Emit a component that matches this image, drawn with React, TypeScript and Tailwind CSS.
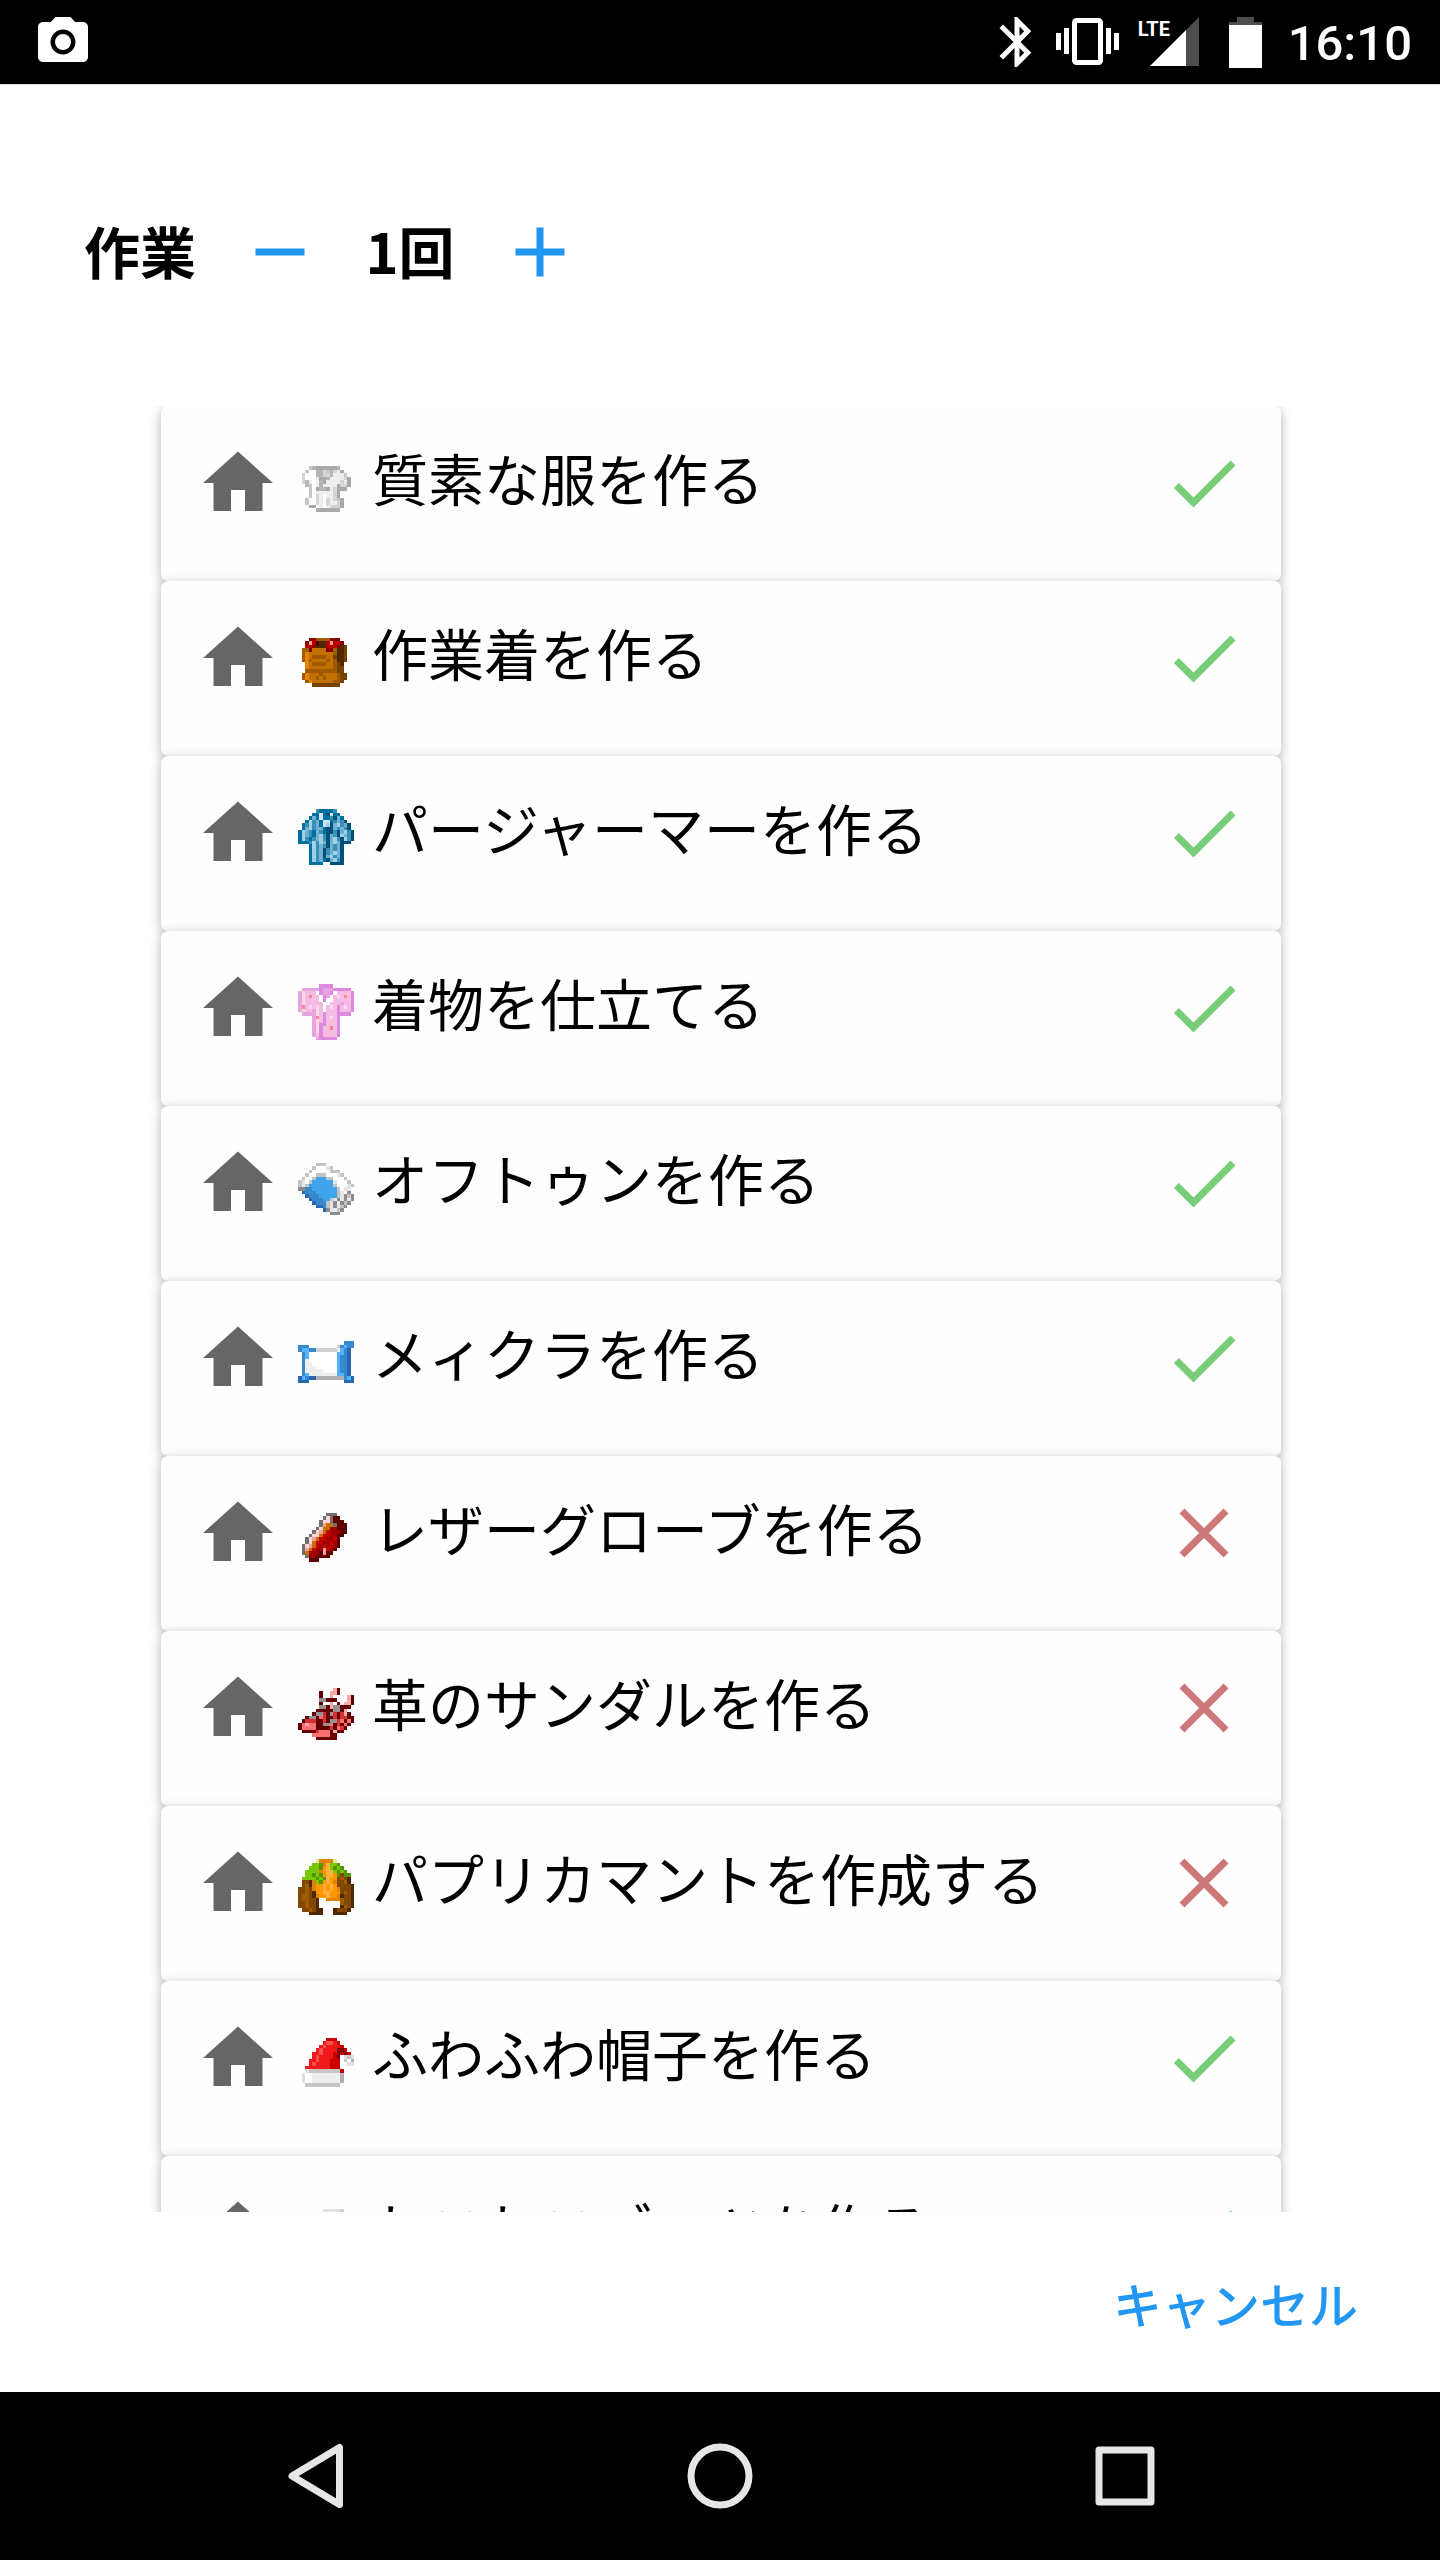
import { useState } from "react";
import type { ReactNode } from "react";

type SpriteData = { palette: Record<string, string>; rows: string[] };

const shirt: SpriteData = {
  palette: { a: "#a8a8a8", m: "#b6b6b6", b: "#c6c6c6", c: "#d4d4d4", d: "#eeeeee", w: "#ffffff" },
  rows: [
    "................",
    "................",
    "...bmaaaaaam....",
    "..bwwmmcbmcda...",
    ".cwwwmmccmdddb..",
    ".cwwwdaamddddca.",
    ".cmdwdmaddddcda.",
    "..mbwdmddddacca.",
    "...bwammadcaaa..",
    "...bwdddddca....",
    "...bwcdwddca....",
    "..bwwcdwcdcba...",
    "..bwwcdwcddca...",
    "...aawdwdccca...",
    ".....aaaaaaa....",
    "................",
  ],
};

const backpack: SpriteData = {
  palette: {
    R: "#880000", r: "#b80000", P: "#ff9c9c", k: "#480000", D: "#502800",
    B: "#784000", O: "#a05a00", o: "#c47000", L: "#e48400",
  },
  rows: [
    "................",
    "...RROOOORRR....",
    "..RPrkDDrPrrR...",
    "..rrRDDDrrrRDB..",
    ".OORooooRRODDB..",
    ".OLoooooooODDB..",
    ".OLoOOOOooBDDB..",
    ".OLOooooOoODDB..",
    "..LoOOOOooOBD...",
    "..LoooooooOBB...",
    "..OOOOOOOOOBB...",
    ".OLoooOooooOBB..",
    ".OLooOoOoooOBB..",
    "..OLooooooOOB...",
    "....BBBBBBBB....",
    "................",
  ],
};

const pajama: SpriteData = {
  palette: { T: "#0070a0", N: "#005078", M: "#3890b8", S: "#70b0d0", L: "#a0d0e4", W: "#c8e8f8" },
  rows: [
    ".....MTTTTM.....",
    "....TTWTNWTT....",
    "...TSTWTTMNST...",
    "..TLMSTWWTMSMN..",
    ".TMLMSTWLNSLMSN.",
    ".TSLMSSTNNSMSMN.",
    "TLSMTSMTNNMNSLMN",
    "TLSMTSLMNSMNLSMN",
    "TLMTMSLMNSLMNLMN",
    "TTTMLMLSNSLSNNN.",
    "...TLMSMNSMSN...",
    "...TLMSNMSMSN...",
    "...TLMSNMSLSN...",
    "...TLMSNSLMSN...",
    "...TLMSTNSLMN...",
    "...TTTT..NNNN...",
  ],
};

const kimono: SpriteData = {
  palette: { V: "#de88e0", v: "#e8a4e0", P: "#f4bce0", K: "#fcd8e0", R: "#f88888", w: "#ffffff", Q: "#fcd4fc" },
  rows: [
    "......VVVV......",
    ".vvvvvVvvvVVVVV.",
    "vKPPPwVvvVwPPPPV",
    "vKPRPPwVvwPQPRPV",
    "vKPPPPwVwwPPPPPV",
    "vKPPPPPwwPPPvPPV",
    "vRPQPKPwPQPVPQPV",
    "vKPPvKPwPPPVPPPV",
    ".vvvvKPVPPPVVVV.",
    "....vRPVPQPV....",
    "....vKPVPPPV....",
    "....vKVVPPPV....",
    "....vKVPPRPV....",
    "....vKVPPPPV....",
    "....vPVPPPPV....",
    ".....vVVVVV.....",
  ],
};

const futon: SpriteData = {
  palette: { c: "#c4c4c4", g: "#8c8c8c", e: "#e6e6e6", w: "#ffffff", B: "#2868b0", b: "#3888d0", s: "#40a4ec" },
  rows: [
    "................",
    ".....ccc........",
    "....cwwwec......",
    "...cwwwwwccc....",
    "..cwwcccwwwec...",
    ".cwwcsssccwwwc..",
    "cewcssssssewwwc.",
    "cecssssssscwwwec",
    "ggbbssssssscwee.",
    ".Bbbbsssssscewg.",
    "..Bbbbssssscegcg",
    "...Bbbbsscegegeg",
    "....Bbbbcegegcg.",
    ".....BBbcegecg..",
    ".......Bgeecg...",
    ".........ggg....",
  ],
};

const pillow: SpriteData = {
  palette: { c: "#d0d0d0", m: "#b0b0b0", e: "#eeeeee", w: "#ffffff", B: "#2868b0", b: "#3888d0", s: "#50b4ff" },
  rows: [
    "................",
    "................",
    ".............bbb",
    "bbb........cbsbb",
    "bssbbccccccesbB.",
    ".bswwwwwwwwssbB.",
    ".bswwwwwwwwsbbB.",
    ".bewwwwwwwwsbbB.",
    ".beewwwwwwwsbbB.",
    ".beeewwwwwwsbbB.",
    ".beeeeewwwwsbbB.",
    ".bseeeeeeeessbB.",
    "BsbBBmmmmmmmmbsB",
    "BBB..........BBB",
    "................",
    "................",
  ],
};

const glove: SpriteData = {
  palette: { g: "#707070", P: "#ffd4d4", p: "#f8a0a0", O: "#c47000", k: "#600000", R: "#a00000", r: "#c80000" },
  rows: [
    "................",
    "........ggg.....",
    ".......gPgkk....",
    "......gPPgkkk...",
    "......gpOOgkkk..",
    ".....gPOORRkkk..",
    "....gPpOrRRRkk..",
    "...gPPOrrRRkk...",
    "..gPpOrrRRrk....",
    "..gPOrrRRrRk....",
    ".gPpOrRrRrRk....",
    ".gpOrRRprRk.....",
    ".gORRRkpkk......",
    "..gRRkkkk.......",
    "...kkk..........",
    "................",
  ],
};

const sandals: SpriteData = {
  palette: { p: "#f8a8a8", P: "#f87070", g: "#989090", k: "#640000", R: "#a00000", r: "#d83030" },
  rows: [
    "................",
    "..........pk....",
    "......k..ppk....",
    "......k..p....pk",
    "......ggkkk...pk",
    "......k..p.k.ppk",
    "......ggkpggkkk.",
    ".....kkkkkggkp..",
    "....kggrkgrkrpk.",
    "..kggkPrkkrkrrkk",
    ".krrrkkrkggrPkPk",
    "kPpPPkkggPkrkPk.",
    "kPPPPkkkkrkPrk..",
    ".kkkkrPPPkpkk...",
    "....PPPPPkk.....",
    ".....kkkkkk.....",
  ],
};

const cloak: SpriteData = {
  palette: {
    G: "#78c800", g: "#589400", y: "#d0f098", o: "#ff9800", O: "#e08400",
    l: "#ffb040", B: "#804800", b: "#a05c00", D: "#502800",
  },
  rows: [
    ".....yOOOOy.....",
    "....GGgOlGGg....",
    "...GGGgolGgGg...",
    "..GGGGOollGgGg..",
    "..GGgGgollogBgg.",
    ".GGGGgGglooBbBD.",
    ".BBDOGgoloOBBbD.",
    ".BbDOoololoBBBBD",
    "BBbBOoololoOBBBD",
    "BBbBDoolloooBbBD",
    "BbbBDOoolooODBBD",
    "BbbBBD..OOOObBBD",
    "BBbBBD......bBBD",
    "BBbBBD......DbBD",
    ".BBbBDD...DBBBD.",
    "...DDDD...DDDD..",
  ],
};

const hat: SpriteData = {
  palette: {
    R: "#c80000", r: "#f01818", p: "#f85050", D: "#800000",
    e: "#e0e0e0", c: "#c6c6c6", m: "#b0b0b0", f: "#eeeeee", w: "#ffffff",
  },
  rows: [
    "................",
    "........RRR.....",
    ".......rpprR....",
    "......rprrrrR...",
    ".....rprrrrDDR..",
    "....rrprrrRDRDR.",
    "....rprrrrRD.ece",
    "...rrprrrRRR.cwm",
    "...rprrrrRRR..ee",
    "..rrrrrrrRRR....",
    "..ecccccccccR...",
    ".ewwffffffffm...",
    ".ewwffffffffm...",
    ".ewwffffffffm...",
    "..cccccccccc....",
    "................",
  ],
};

const boots: SpriteData = {
  palette: { e: "#e2e2e2", c: "#d0d0d0", f: "#f2f2f2" },
  rows: [
    ".......eeeeec...",
    "......effffec...",
    "......effffec...",
    "......effffec...",
    "......effffec...",
    "......effffec...",
    "......effffec...",
    ".....eeffffec...",
    "....effffffec...",
    "...efffffffec...",
    "..effffffffec...",
    "..effffffffec...",
    "..ccccccccccc...",
    "................",
    "................",
    "................",
  ],
};

const recipes: { name: string; sprite: SpriteData; ready: boolean }[] = [
  { name: "質素な服を作る", sprite: shirt, ready: true },
  { name: "作業着を作る", sprite: backpack, ready: true },
  { name: "パージャーマーを作る", sprite: pajama, ready: true },
  { name: "着物を仕立てる", sprite: kimono, ready: true },
  { name: "オフトゥンを作る", sprite: futon, ready: true },
  { name: "メィクラを作る", sprite: pillow, ready: true },
  { name: "レザーグローブを作る", sprite: glove, ready: false },
  { name: "革のサンダルを作る", sprite: sandals, ready: false },
  { name: "パプリカマントを作成する", sprite: cloak, ready: false },
  { name: "ふわふわ帽子を作る", sprite: hat, ready: true },
  { name: "ねこねこブーツを作る", sprite: boots, ready: true },
];

function Sprite({ data }: { data: SpriteData }) {
  return (
    <svg viewBox="0 0 16 16" className="size-14 shrink-0" shapeRendering="crispEdges" aria-hidden="true">
      {data.rows.flatMap((row, y) =>
        [...row].map((key, x) =>
          data.palette[key] ? (
            <rect key={`${x}-${y}`} x={x} y={y} width="1" height="1" fill={data.palette[key]} />
          ) : null,
        ),
      )}
    </svg>
  );
}

function Icon({ d, className, label }: { d: string; className: string; label?: string }) {
  return (
    <svg
      viewBox="0 0 24 24"
      className={className}
      fill="currentColor"
      role={label ? "img" : undefined}
      aria-label={label}
      aria-hidden={label ? undefined : true}
    >
      <path d={d} />
    </svg>
  );
}

const HOME = "M10 20v-6h4v6h5v-8h3L12 3 2 12h3v8z";
const CHECK = "M9 16.17 4.83 12l-1.42 1.41L9 19 21 7l-1.41-1.41z";
const CLOSE = "M19 6.41 17.59 5 12 10.59 6.41 5 5 6.41 10.59 12 5 17.59 6.41 19 12 13.41 17.59 19 19 17.59 13.41 12z";
const MINUS = "M19 13H5v-2h14z";
const PLUS = "M19 13h-6v6h-2v-6H5v-2h6V5h2v6h6z";
const CAMERA =
  "M12 8.8a3.2 3.2 0 1 0 0 6.4 3.2 3.2 0 0 0 0-6.4zM9 2 7.17 4H4c-1.1 0-2 .9-2 2v12c0 1.1.9 2 2 2h16c1.1 0 2-.9 2-2V6c0-1.1-.9-2-2-2h-3.17L15 2H9zm3 15c-2.76 0-5-2.24-5-5s2.24-5 5-5 5 2.24 5 5-2.24 5-5 5z";
const BLUETOOTH =
  "M17.71 7.71 12 2h-1v7.59L6.41 5 5 6.41 10.59 12 5 17.59 6.41 19 11 14.41V22h1l5.71-5.71-4.3-4.29 4.3-4.29zM13 5.83l1.88 1.88L13 9.59V5.83zm1.88 10.46L13 18.17v-3.76l1.88 1.88z";

function StatusBar() {
  return (
    <header className="flex h-[84px] shrink-0 items-center justify-between bg-black pr-[28px] pl-[33px] text-white">
      <Icon d={CAMERA} className="size-[60px]" label="カメラ" />
      <div className="flex items-center">
        <Icon d={BLUETOOTH} className="size-[60px]" label="Bluetooth" />
        <svg viewBox="0 0 63 48" className="ml-[9px] h-[48px] w-[63px]" fill="currentColor" role="img" aria-label="バイブ">
          <path d="M0 15h5v17H0zM8 10h5v26H8zM50 10h5v26h-5zM58 15h5v17h-5z" />
          <rect x="18.500" y="2.500" width="26" height="42" rx="2" fill="none" stroke="currentColor" strokeWidth="5" />
        </svg>
        <div className="relative ml-[19px] h-[50px] w-[61px]">
          <svg viewBox="0 0 61 50" className="size-full" aria-hidden="true">
            <path d="M61 0v49H48V13z" fill="#4d4d4d" />
            <path d="M12 49 48 13v36z" fill="#ffffff" />
          </svg>
          <span className="absolute top-0 left-0 text-[20px] leading-[24px] font-bold">LTE</span>
        </div>
        <svg viewBox="0 0 33 51" className="ml-[30px] h-[51px] w-[33px]" role="img" aria-label="電池">
          <path d="M8 0h17v5h8v4H0V5h8z" fill="#4d4d4d" />
          <path d="M0 8h33v43H0z" fill="#ffffff" />
        </svg>
        <time className="ml-[26px] pt-1 text-[49px] leading-[60px] font-medium">16:10</time>
      </div>
    </header>
  );
}

function NavButton({ label, children }: { label: string; children: ReactNode }) {
  return (
    <button type="button" aria-label={label} className="flex items-center justify-center">
      <svg viewBox="0 0 84 84" className="size-[84px]" fill="none" stroke="#e6e6e6" strokeWidth="7" strokeLinejoin="round">
        {children}
      </svg>
    </button>
  );
}

export default function App() {
  const [count, setCount] = useState(1);

  return (
    <div className="flex h-screen flex-col overflow-hidden bg-white font-[Roboto,'Noto_Sans_CJK_JP',sans-serif] text-black">
      <StatusBar />
      <main className="flex min-h-0 flex-1 flex-col border-t border-[#dddddd]">
        <div className="flex items-center gap-[42px] px-[84px] pt-[125px] pb-[112px] font-['Noto_Sans_CJK_JP',sans-serif] text-[56px] leading-[78px] font-bold">
          <h1 className="pb-1">作業</h1>
          <button type="button" aria-label="減らす" className="text-[#2196f3]" onClick={() => setCount(Math.max(1, count - 1))}>
            <Icon d={MINUS} className="size-[84px]" />
          </button>
          <output className="min-w-[92px] pb-1 text-center">{count}回</output>
          <button type="button" aria-label="増やす" className="text-[#2196f3]" onClick={() => setCount(count + 1)}>
            <Icon d={PLUS} className="size-[84px]" />
          </button>
        </div>

        <ul className="min-h-0 flex-1 overflow-hidden pr-[159px] pl-[161px]">
          {recipes.map((recipe) => (
            <li key={recipe.name} className="relative rounded-[7px] bg-[#fefefe] shadow-[0_3px_12px_rgba(0,0,0,0.3)]">
              <button type="button" className="flex h-[175px] w-full items-start px-[35px] pt-[35px] text-left">
                <Icon d={HOME} className="size-[84px] shrink-0 text-[#666666]" />
                <span className="flex flex-1 items-start gap-[18px] pt-[18px] pl-[18px]">
                  <Sprite data={recipe.sprite} />
                  <span className="-mt-[10px] font-['Noto_Sans_CJK_JP',sans-serif] text-[56px] leading-[56px] whitespace-nowrap">
                    {recipe.name}
                  </span>
                </span>
                {recipe.ready ? (
                  <Icon d={CHECK} className="size-[84px] shrink-0 text-[#78cd78]" label="作成可能" />
                ) : (
                  <Icon d={CLOSE} className="size-[84px] shrink-0 text-[#cc7878]" label="作成不可" />
                )}
              </button>
            </li>
          ))}
        </ul>

        <div className="flex h-[180px] shrink-0 items-center justify-end px-[82px] pt-[2px]">
          <button type="button" className="font-['Noto_Sans_CJK_JP',sans-serif] text-[49px] leading-[72px] font-medium text-[#2196f3]">
            キャンセル
          </button>
        </div>
      </main>
      <nav className="grid h-[168px] shrink-0 grid-cols-3 bg-black px-28">
        <NavButton label="戻る">
          <path d="M66.500 13.500v57L19 42z" />
        </NavButton>
        <NavButton label="ホーム">
          <circle cx="42" cy="42" r="29" />
        </NavButton>
        <NavButton label="アプリ履歴">
          <rect x="16" y="16" width="52" height="52" />
        </NavButton>
      </nav>
    </div>
  );
}
